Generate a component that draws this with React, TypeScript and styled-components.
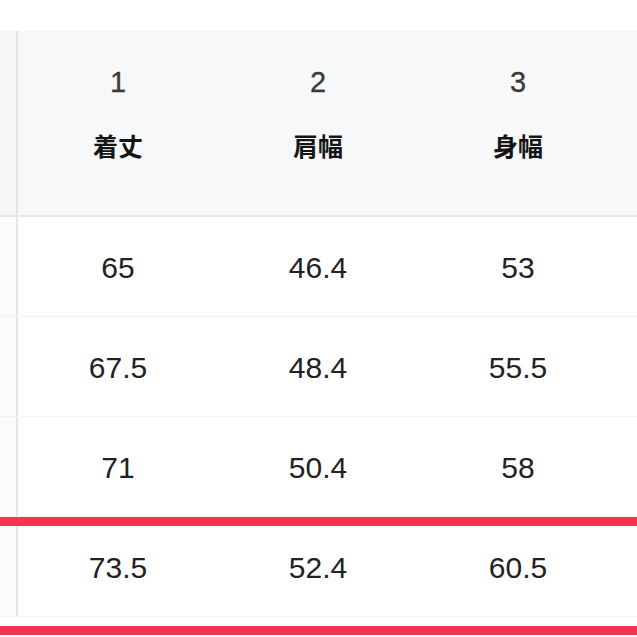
import React from 'react';
import styled, { createGlobalStyle } from 'styled-components';

const GlobalStyle = createGlobalStyle`
  html, body {
    margin: 0;
    padding: 0;
    background: #ffffff;
    overflow: hidden;
  }
  body {
    font-family: 'Liberation Sans', 'Noto Sans CJK JP', sans-serif;
  }
`;

const Page = styled.div`
  width: 637px;
  height: 637px;
  padding-top: 31px;
  box-sizing: border-box;
  overflow: hidden;
  background: #ffffff;
`;

const Table = styled.div`
  width: 900px;
  display: flex;
  flex-direction: column;
`;

const Row = styled.div<{ $header?: boolean }>`
  position: relative;
  display: grid;
  grid-template-columns: 18px repeat(4, 200px);
  height: ${(p) => (p.$header ? '186px' : '100px')};
  background: ${(p) => (p.$header ? '#f7f8fa' : '#ffffff')};
  border-bottom: ${(p) => (p.$header ? '2px solid #e5e6e9' : '1px solid #f3f3f4')};
  box-sizing: border-box;
`;

const Stub = styled.div<{ $header?: boolean }>`
  border-right: 2px solid #e3e4e7;
  background: ${(p) => (p.$header ? '#f5f6f8' : '#fbfbfc')};
`;

const HeadCell = styled.div`
  display: flex;
  flex-direction: column;
  align-items: center;
  padding-top: 31px;
  gap: 23px;
`;

const HeadNum = styled.div`
  font-size: 29px;
  line-height: 40px;
  color: #3a3a3a;
  -webkit-text-stroke: 0.3px #3a3a3a;
`;

const HeadName = styled.div`
  font-family: 'Noto Sans CJK JP', sans-serif;
  font-size: 25px;
  font-weight: 700;
  line-height: 40px;
  color: #151515;
`;

const Cell = styled.div`
  display: flex;
  align-items: center;
  justify-content: center;
  font-size: 30px;
  color: #222222;
  padding-top: 2px;
`;

const Highlight = styled.div`
  position: absolute;
  left: -20px;
  right: 0;
  top: 0;
  bottom: -19px;
  border-top: 9px solid #f33552;
  border-bottom: 9px solid #f33552;
  pointer-events: none;
`;

const headers = [
  { n: '1', name: '着丈' },
  { n: '2', name: '肩幅' },
  { n: '3', name: '身幅' },
];

const rows = [
  ['65', '46.4', '53'],
  ['67.5', '48.4', '55.5'],
  ['71', '50.4', '58'],
  ['73.5', '52.4', '60.5'],
];

export default function App() {
  return (
    <Page>
      <GlobalStyle />
      <Table>
        <Row $header>
          <Stub $header />
          {headers.map((h) => (
            <HeadCell key={h.n}>
              <HeadNum>{h.n}</HeadNum>
              <HeadName>{h.name}</HeadName>
            </HeadCell>
          ))}
          <HeadCell />
        </Row>
        {rows.map((r, i) => (
          <Row key={i}>
            <Stub />
            {r.map((v, j) => (
              <Cell key={j}>{v}</Cell>
            ))}
            <Cell />
            {i === rows.length - 1 && <Highlight />}
          </Row>
        ))}
      </Table>
    </Page>
  );
}
